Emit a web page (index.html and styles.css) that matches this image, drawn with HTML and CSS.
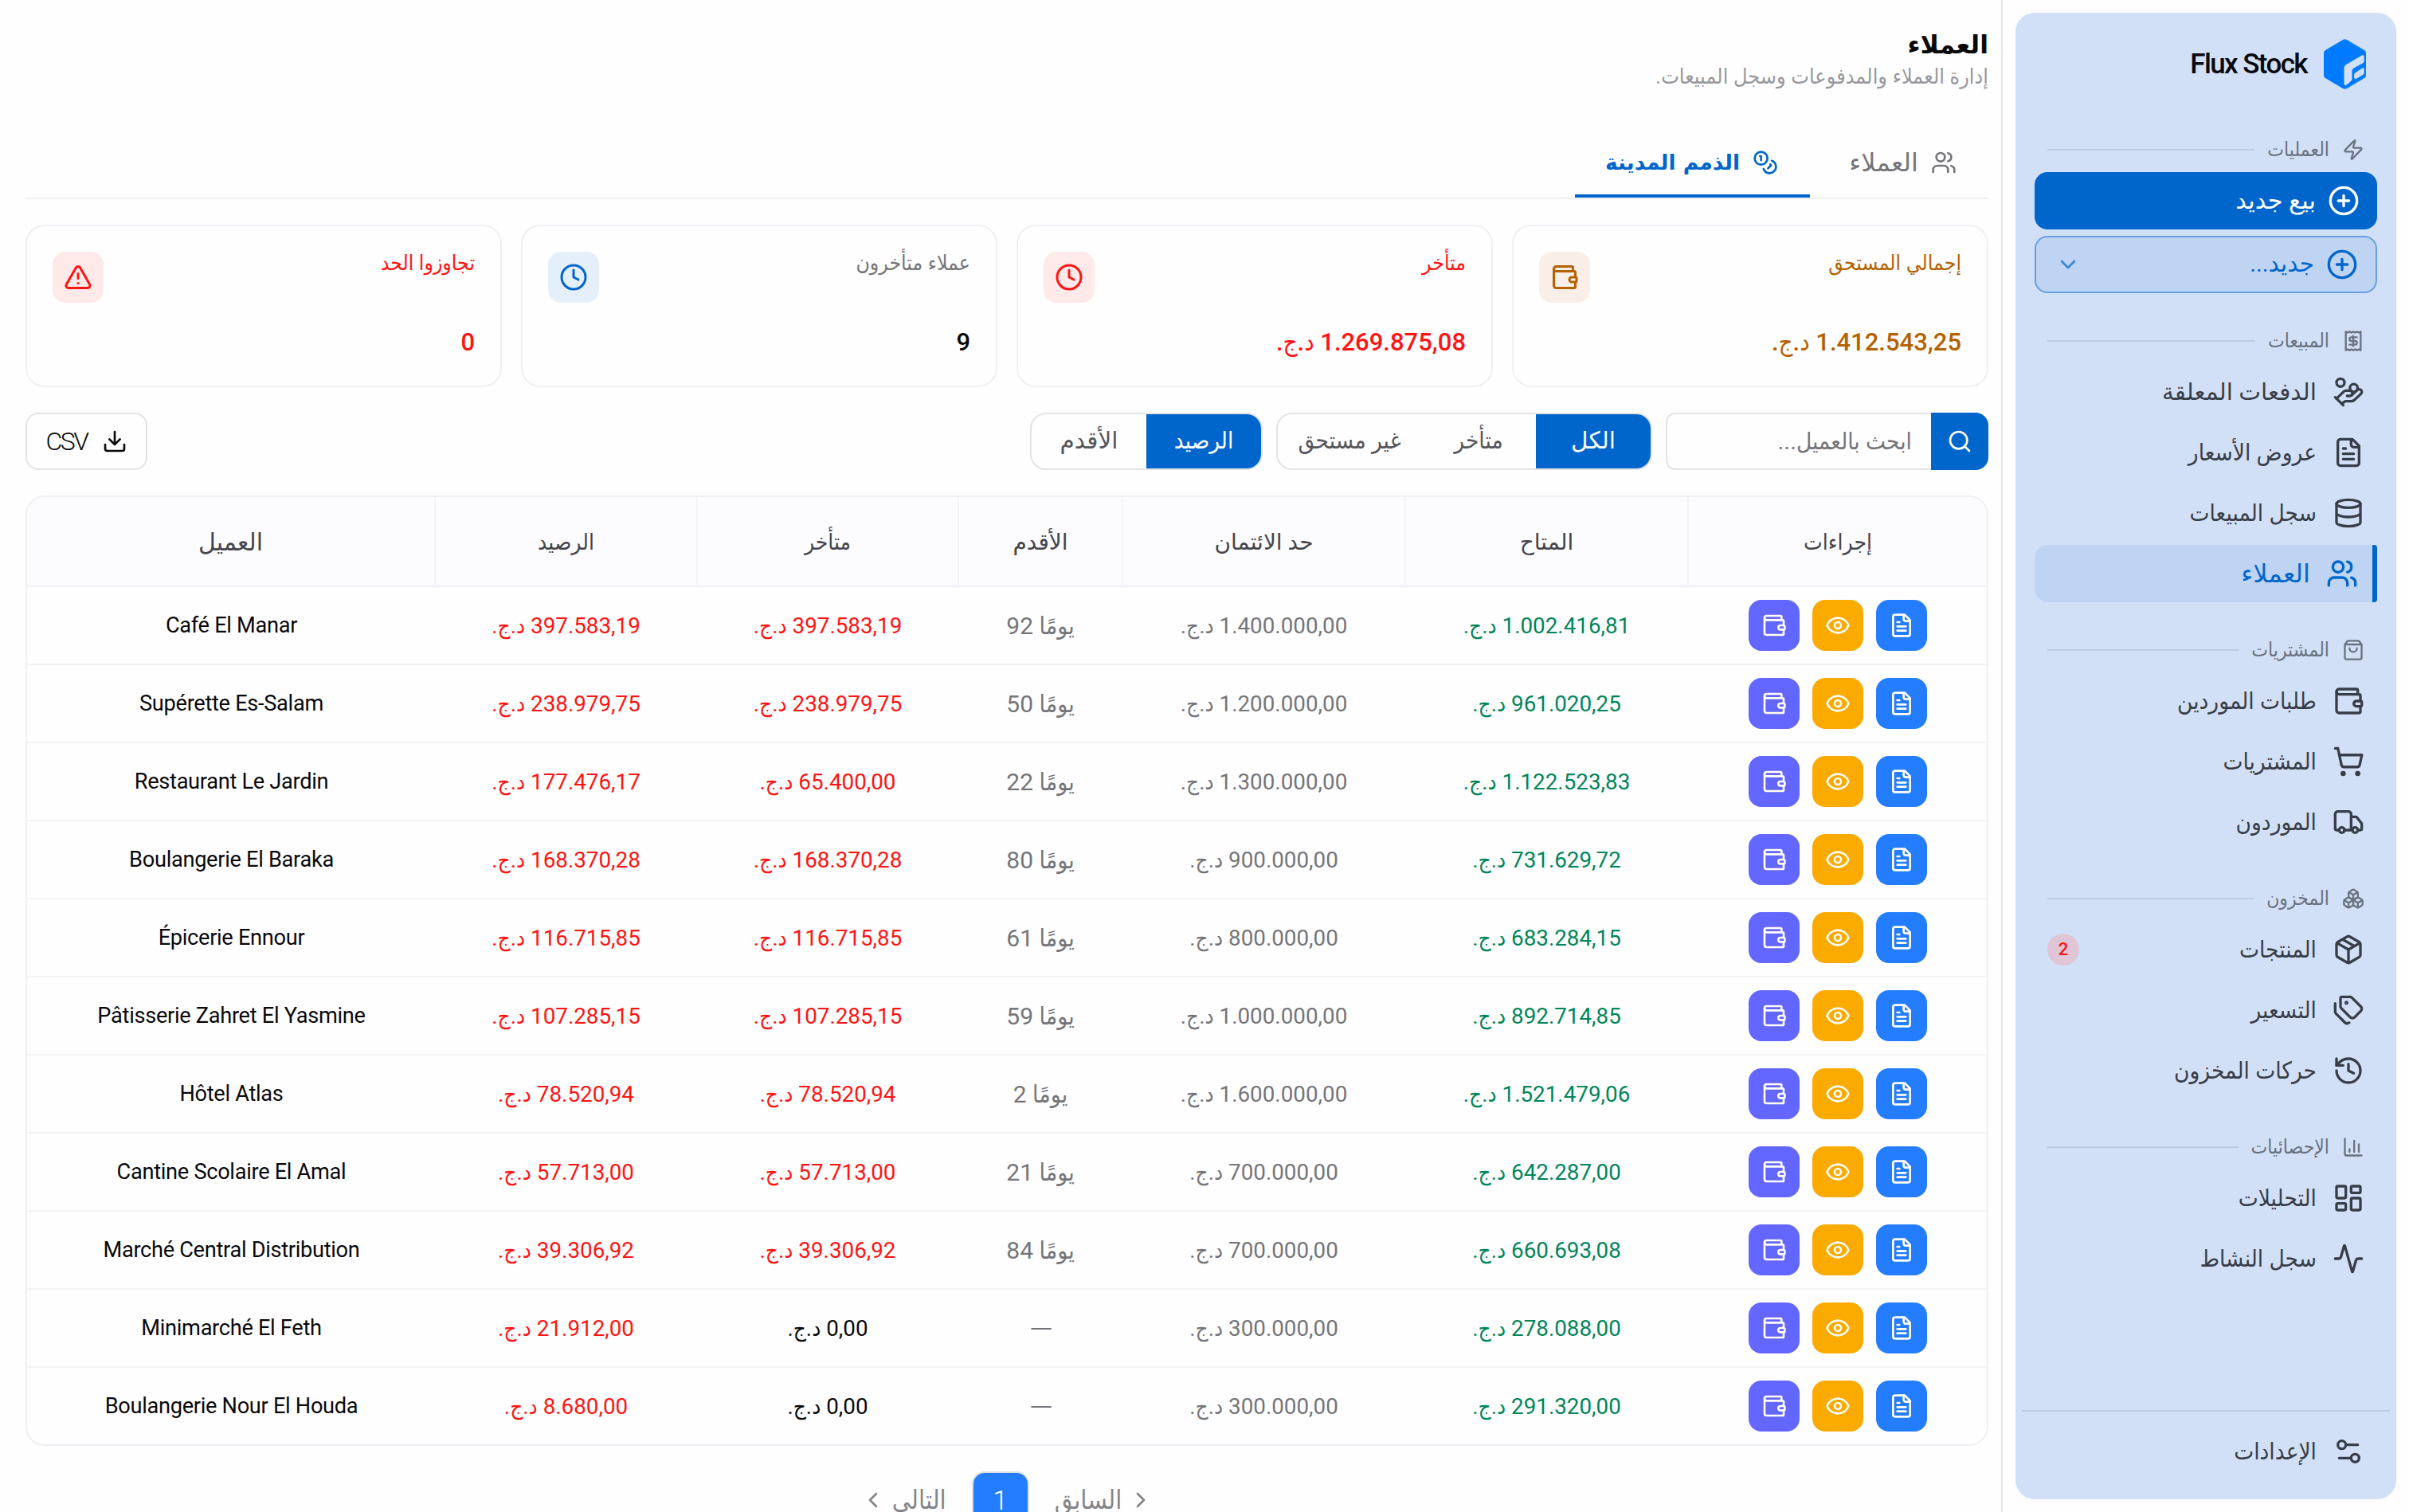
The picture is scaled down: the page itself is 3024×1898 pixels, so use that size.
FILE: index.html
```html
<!DOCTYPE html>
<html lang="ar" dir="rtl">
<head>
    <meta charset="UTF-8">
    <meta name="viewport" content="width=device-width, initial-scale=1.0">
    <title>Flux Stock</title>
    <link rel="stylesheet" href="styles.css">
</head>
<body>
    <svg class="sprite">
        <symbol id="zap" viewBox="0 0 24 24"><path d="M4 14a1 1 0 0 1-.78-1.63l9.9-10.2a.5.5 0 0 1 .86.46l-1.92 6.02A1 1 0 0 0 13 10h7a1 1 0 0 1 .78 1.63l-9.9 10.2a.5.5 0 0 1-.86-.46l1.92-6.02A1 1 0 0 0 11 14z"/></symbol>
        <symbol id="plus" viewBox="0 0 24 24"><circle cx="12" cy="12" r="10"/><path d="M8 12h8M12 8v8"/></symbol>
        <symbol id="chevron-down" viewBox="0 0 24 24"><path d="m6 9 6 6 6-6"/></symbol>
        <symbol id="chevron-left" viewBox="0 0 24 24"><path d="m15 18-6-6 6-6"/></symbol>
        <symbol id="chevron-right" viewBox="0 0 24 24"><path d="m9 18 6-6-6-6"/></symbol>
        <symbol id="receipt" viewBox="0 0 24 24"><path d="M4 2v20l2-1 2 1 2-1 2 1 2-1 2 1 2-1 2 1V2l-2 1-2-1-2 1-2-1-2 1-2-1-2 1ZM16 8h-6a2 2 0 1 0 0 4h4a2 2 0 1 1 0 4H8M12 17.5v-11"/></symbol>
        <symbol id="hand-coins" viewBox="0 0 24 24"><path d="M11 15h2a2 2 0 1 0 0-4h-3c-.6 0-1.1.2-1.4.6L3 17"/><path d="m7 21 1.6-1.4c.3-.4.8-.6 1.4-.6h4c1.1 0 2.1-.4 2.8-1.2l4.6-4.4a2 2 0 0 0-2.75-2.91l-4.2 3.9M2 16l6 6"/><circle cx="16" cy="9" r="2.9"/><circle cx="6" cy="5" r="3"/></symbol>
        <symbol id="file" viewBox="0 0 24 24"><path d="M15 2H6a2 2 0 0 0-2 2v16a2 2 0 0 0 2 2h12a2 2 0 0 0 2-2V7Z"/><path d="M14 2v4a2 2 0 0 0 2 2h4M10 9H8M16 13H8M16 17H8"/></symbol>
        <symbol id="database" viewBox="0 0 24 24"><ellipse cx="12" cy="5" rx="9" ry="3"/><path d="M3 5V19A9 3 0 0 0 21 19V5M3 12A9 3 0 0 0 21 12"/></symbol>
        <symbol id="users" viewBox="0 0 24 24"><path d="M16 21v-2a4 4 0 0 0-4-4H6a4 4 0 0 0-4 4v2"/><circle cx="9" cy="7" r="4"/><path d="M22 21v-2a4 4 0 0 0-3-3.87M16 3.13a4 4 0 0 1 0 7.75"/></symbol>
        <symbol id="bag" viewBox="0 0 24 24"><path d="M16 10a4 4 0 0 1-8 0M3.103 6.034h17.794"/><path d="M3.4 5.467a2 2 0 0 0-.4 1.2V20a2 2 0 0 0 2 2h14a2 2 0 0 0 2-2V6.667a2 2 0 0 0-.4-1.2l-2-2.667A2 2 0 0 0 17 2H7a2 2 0 0 0-1.6.8z"/></symbol>
        <symbol id="wallet" viewBox="0 0 24 24"><path d="M19 7V4a1 1 0 0 0-1-1H5a2 2 0 0 0 0 4h15a1 1 0 0 1 1 1v4h-3a2 2 0 0 0 0 4h3a1 1 0 0 0 1-1v-2a1 1 0 0 0-1-1"/><path d="M3 5v14a2 2 0 0 0 2 2h15a1 1 0 0 0 1-1v-4"/></symbol>
        <symbol id="cart" viewBox="0 0 24 24"><circle cx="8" cy="21" r="1"/><circle cx="19" cy="21" r="1"/><path d="M2.05 2.05h2l2.66 12.42a2 2 0 0 0 2 1.58h9.78a2 2 0 0 0 1.95-1.57l1.65-7.43H5.12"/></symbol>
        <symbol id="truck" viewBox="0 0 24 24"><path d="M14 18V6a2 2 0 0 0-2-2H4a2 2 0 0 0-2 2v11a1 1 0 0 0 1 1h2M15 18H9M19 18h2a1 1 0 0 0 1-1v-3.65a1 1 0 0 0-.22-.624l-3.48-4.35A1 1 0 0 0 17.52 8H14"/><circle cx="17" cy="18" r="2"/><circle cx="7" cy="18" r="2"/></symbol>
        <symbol id="boxes" viewBox="0 0 24 24"><path d="M2.97 12.92A2 2 0 0 0 2 14.63v3.24a2 2 0 0 0 .97 1.71l3 1.8a2 2 0 0 0 2.06 0L12 19v-5.5l-5-3-4.03 2.42ZM7 16.5l-4.74-2.85M7 16.5l5-3M7 16.5v5.17"/><path d="M12 13.5V19l3.97 2.38a2 2 0 0 0 2.06 0l3-1.8a2 2 0 0 0 .97-1.71v-3.24a2 2 0 0 0-.97-1.71L17 10.5l-5 3ZM17 16.5l-5-3M17 16.5l4.74-2.85M17 16.5v5.17"/><path d="M7.97 4.42A2 2 0 0 0 7 6.13v4.37l5 3 5-3V6.13a2 2 0 0 0-.97-1.71l-3-1.8a2 2 0 0 0-2.06 0l-3 1.8ZM12 8 7.26 5.15M12 8l4.74-2.85M12 13.5V8"/></symbol>
        <symbol id="package" viewBox="0 0 24 24"><path d="M11 21.73a2 2 0 0 0 2 0l7-4A2 2 0 0 0 21 16V8a2 2 0 0 0-1-1.73l-7-4a2 2 0 0 0-2 0l-7 4A2 2 0 0 0 3 8v8a2 2 0 0 0 1 1.73zM12 22V12M3.3 7l8.7 5 8.7-5M7.5 4.27l9 5.15"/></symbol>
        <symbol id="tags" viewBox="0 0 24 24"><path d="M13.172 2a2 2 0 0 1 1.414.586l6.71 6.71a2.4 2.4 0 0 1 0 3.408l-4.592 4.592a2.4 2.4 0 0 1-3.408 0l-6.71-6.71A2 2 0 0 1 6 9.172V3a1 1 0 0 1 1-1z"/><path d="M2 7v6.172a2 2 0 0 0 .586 1.414l6.71 6.71a2.4 2.4 0 0 0 3.191.193"/><circle cx="10.5" cy="6.5" r=".5" fill="currentColor"/></symbol>
        <symbol id="history" viewBox="0 0 24 24"><path d="M3 12a9 9 0 1 0 9-9 9.75 9.75 0 0 0-6.74 2.74L3 8"/><path d="M3 3v5h5M12 7v5l4 2"/></symbol>
        <symbol id="chart" viewBox="0 0 24 24"><path d="M3 3v16a2 2 0 0 0 2 2h16M18 17V9M13 17V5M8 17v-3"/></symbol>
        <symbol id="dashboard" viewBox="0 0 24 24"><rect x="3" y="3" width="7" height="9" rx="1"/><rect x="14" y="3" width="7" height="5" rx="1"/><rect x="14" y="12" width="7" height="9" rx="1"/><rect x="3" y="16" width="7" height="5" rx="1"/></symbol>
        <symbol id="activity" viewBox="0 0 24 24"><path d="M22 12h-2.48a2 2 0 0 0-1.93 1.46l-2.35 8.36a.25.25 0 0 1-.48 0L9.24 2.18a.25.25 0 0 0-.48 0l-2.35 8.36A2 2 0 0 1 4.49 12H2"/></symbol>
        <symbol id="settings" viewBox="0 0 24 24"><path d="M14 17H5M19 7h-9"/><circle cx="17" cy="17" r="3"/><circle cx="7" cy="7" r="3"/></symbol>
        <symbol id="coins" viewBox="0 0 24 24"><circle cx="8" cy="8" r="6"/><path d="M18.09 10.37A6 6 0 1 1 10.34 18M7 6h1v4M16.71 13.88l.7.71-2.82 2.82"/></symbol>
        <symbol id="clock" viewBox="0 0 24 24"><circle cx="12" cy="12" r="10"/><path d="M12 6v6l4 2"/></symbol>
        <symbol id="alert" viewBox="0 0 24 24"><path d="m21.73 18-8-14a2 2 0 0 0-3.48 0l-8 14A2 2 0 0 0 4 21h16a2 2 0 0 0 1.73-3M12 9v4M12 17h.01"/></symbol>
        <symbol id="search" viewBox="0 0 24 24"><circle cx="11" cy="11" r="8"/><path d="m21 21-4.34-4.34"/></symbol>
        <symbol id="download" viewBox="0 0 24 24"><path d="M12 15V3M21 15v4a2 2 0 0 1-2 2H5a2 2 0 0 1-2-2v-4M7 10l5 5 5-5"/></symbol>
        <symbol id="eye" viewBox="0 0 24 24"><path d="M2.062 12.348a1 1 0 0 1 0-.696 10.75 10.75 0 0 1 19.876 0 1 1 0 0 1 0 .696 10.75 10.75 0 0 1-19.876 0"/><circle cx="12" cy="12" r="3"/></symbol>
    </svg>

    <aside class="sidebar">
        <div class="panel">
            <div class="brand">
                <svg class="logo" viewBox="0 0 160 190">
                    <path class="logo-box" d="M72 3q8-5 16 0l66 39q6 4 6 11v84q0 7-6 11l-66 39q-8 5-16 0L6 148q-6-4-6-11V53q0-7 6-11z"/>
                    <path class="logo-mark" d="M77 109q0-8 7-12l60-35q9-4 9 5v16q0 5-5 8l-35 20q-6 4-6 10v30q0 5-4 8l-15 14q-11 6-11-5z"/>
                    <path class="logo-mark" d="M115 135q0-5 4-7l26-17q8-4 8 3v13q0 5-4 8l-24 14q-10 5-10-4z"/>
                </svg>
                <span>Flux Stock</span>
            </div>

            <div class="group first"><svg class="icon"><use href="#zap"/></svg><span>العمليات</span><hr></div>
            <a class="new-sale"><svg class="icon"><use href="#plus"/></svg><span>بيع جديد</span></a>
            <a class="new-other"><svg class="icon"><use href="#plus"/></svg><span>جديد...</span><svg class="icon chevron"><use href="#chevron-down"/></svg></a>

            <div class="group"><svg class="icon"><use href="#receipt"/></svg><span>المبيعات</span><hr></div>
            <nav>
                <a class="wide"><svg class="icon"><use href="#hand-coins"/></svg>الدفعات المعلقة</a>
                <a><svg class="icon"><use href="#file"/></svg>عروض الأسعار</a>
                <a><svg class="icon"><use href="#database"/></svg>سجل المبيعات</a>
                <a class="active wide"><svg class="icon"><use href="#users"/></svg>العملاء</a>
            </nav>

            <div class="group"><svg class="icon"><use href="#bag"/></svg><span>المشتريات</span><hr></div>
            <nav>
                <a><svg class="icon"><use href="#wallet"/></svg>طلبات الموردين</a>
                <a><svg class="icon"><use href="#cart"/></svg>المشتريات</a>
                <a><svg class="icon"><use href="#truck"/></svg>الموردون</a>
            </nav>

            <div class="group"><svg class="icon"><use href="#boxes"/></svg><span>المخزون</span><hr></div>
            <nav>
                <a><svg class="icon"><use href="#package"/></svg>المنتجات<b class="badge">2</b></a>
                <a><svg class="icon"><use href="#tags"/></svg>التسعير</a>
                <a><svg class="icon"><use href="#history"/></svg>حركات المخزون</a>
            </nav>

            <div class="group"><svg class="icon"><use href="#chart"/></svg><span>الإحصائيات</span><hr></div>
            <nav>
                <a><svg class="icon"><use href="#dashboard"/></svg>التحليلات</a>
                <a><svg class="icon"><use href="#activity"/></svg>سجل النشاط</a>
            </nav>

            <div class="panel-footer">
                <nav><a><svg class="icon"><use href="#settings"/></svg>الإعدادات</a></nav>
            </div>
        </div>
    </aside>

    <main>
        <header>
            <h1>العملاء</h1>
            <p>إدارة العملاء والمدفوعات وسجل المبيعات.</p>
        </header>

        <div class="tabs">
            <a><svg class="icon"><use href="#users"/></svg>العملاء</a>
            <a class="active"><svg class="icon"><use href="#coins"/></svg>الذمم المدينة</a>
        </div>

        <section class="cards">
            <div class="card orange">
                <div><h3>إجمالي المستحق</h3><strong>1.412.543,25 د.ج.</strong></div>
                <span class="card-icon"><svg class="icon"><use href="#wallet"/></svg></span>
            </div>
            <div class="card red">
                <div><h3>متأخر</h3><strong>1.269.875,08 د.ج.</strong></div>
                <span class="card-icon"><svg class="icon"><use href="#clock"/></svg></span>
            </div>
            <div class="card blue">
                <div><h3>عملاء متأخرون</h3><strong>9</strong></div>
                <span class="card-icon"><svg class="icon"><use href="#clock"/></svg></span>
            </div>
            <div class="card red">
                <div><h3>تجاوزوا الحد</h3><strong>0</strong></div>
                <span class="card-icon"><svg class="icon"><use href="#alert"/></svg></span>
            </div>
        </section>

        <div class="toolbar">
            <div class="search">
                <button><svg class="icon"><use href="#search"/></svg></button>
                <input type="text" placeholder="ابحث بالعميل...">
            </div>
            <div class="segment">
                <button class="active wide">الكل</button>
                <button>متأخر</button>
                <button class="long">غير مستحق</button>
            </div>
            <div class="segment">
                <button class="active">الرصيد</button>
                <button class="wide">الأقدم</button>
            </div>
            <button class="csv"><svg class="icon"><use href="#download"/></svg><span>CSV</span></button>
        </div>

        <div class="table" id="table">
            <div class="row head">
                <div class="wide client">العميل</div>
                <div>الرصيد</div>
                <div>متأخر</div>
                <div class="wide">الأقدم</div>
                <div class="wide">حد الائتمان</div>
                <div class="wide">المتاح</div>
                <div>إجراءات</div>
            </div>
        </div>

        <div class="pagination">
            <a><svg class="icon"><use href="#chevron-right"/></svg>السابق</a>
            <a class="page">1</a>
            <a>التالي<svg class="icon"><use href="#chevron-left"/></svg></a>
        </div>
    </main>

    <script>
        // name, balance, overdue, oldest (days), credit limit, available
        const clients = [
            ['Café El Manar', '397.583,19', '397.583,19', 92, '1.400.000,00', '1.002.416,81'],
            ['Supérette Es-Salam', '238.979,75', '238.979,75', 50, '1.200.000,00', '961.020,25'],
            ['Restaurant Le Jardin', '177.476,17', '65.400,00', 22, '1.300.000,00', '1.122.523,83'],
            ['Boulangerie El Baraka', '168.370,28', '168.370,28', 80, '900.000,00', '731.629,72'],
            ['Épicerie Ennour', '116.715,85', '116.715,85', 61, '800.000,00', '683.284,15'],
            ['Pâtisserie Zahret El Yasmine', '107.285,15', '107.285,15', 59, '1.000.000,00', '892.714,85'],
            ['Hôtel Atlas', '78.520,94', '78.520,94', 2, '1.600.000,00', '1.521.479,06'],
            ['Cantine Scolaire El Amal', '57.713,00', '57.713,00', 21, '700.000,00', '642.287,00'],
            ['Marché Central Distribution', '39.306,92', '39.306,92', 84, '700.000,00', '660.693,08'],
            ['Minimarché El Feth', '21.912,00', '0,00', 0, '300.000,00', '278.088,00'],
            ['Boulangerie Nour El Houda', '8.680,00', '0,00', 0, '300.000,00', '291.320,00']
        ];

        const icon = (name) => `<svg class="icon"><use href="#${name}"/></svg>`;
        const money = (value, cls) => `<div class="money ${cls}" dir="rtl">${value} د.ج.</div>`;
        const age = (days) => days
            ? `<div class="muted days" dir="rtl">يومًا ${days}</div>`
            : '<div class="muted empty">—</div>';

        const rows = clients.map(([name, balance, overdue, days, limit, available]) => `
            <div class="row">
                <div class="name">${name}</div>
                ${money(balance, 'danger')}
                ${money(overdue, days ? 'danger' : 'zero')}
                ${age(days)}
                ${money(limit, 'muted')}
                ${money(available, 'success')}
                <div class="actions">
                    <button class="indigo">${icon('wallet')}</button>
                    <button class="amber">${icon('eye')}</button>
                    <button class="sky">${icon('file')}</button>
                </div>
            </div>`);

        document.getElementById('table').insertAdjacentHTML('beforeend', rows.join(''));
    </script>
</body>
</html>
```
FILE: styles.css
```css
* {
    box-sizing: border-box;
}

body {
    margin: 0;
    height: 1898px;
    overflow: hidden;
    display: flex;
    background-color: #fefeff;
    color: #09090b;
    font-family: Roboto, "DejaVu Sans Condensed", "DejaVu Sans", sans-serif;
    font-size: 29.5px;
    line-height: 1;
    white-space: nowrap;
}

h1, h3, p {
    margin: 0;
}

button {
    border: none;
    padding: 0;
    background: none;
    color: inherit;
    font: inherit;
}

.sprite {
    display: none;
}

.icon {
    width: 40px;
    height: 40px;
    flex-shrink: 0;
    fill: none;
    stroke: currentColor;
    stroke-width: 2;
    stroke-linecap: round;
    stroke-linejoin: round;
}

/* words that need the regular width cut */
.wide {
    font-family: Roboto, "DejaVu Sans", sans-serif;
}

/* sidebar */
.sidebar {
    width: 512px;
    flex-shrink: 0;
    padding: 16px;
    border-left: 2px solid #e4e4e7;
}

.panel {
    height: 1866px;
    display: flex;
    flex-direction: column;
    padding: 0 24px;
    border-radius: 24px;
    background-color: #d2e0f7;
}

.brand {
    display: flex;
    align-items: center;
    gap: 21px;
    height: 128px;
    padding: 0 14px;
    font-size: 35px;
    font-weight: 500;
    letter-spacing: -1.6px;
    color: #09090f;
}

.logo {
    width: 53px;
    height: 63px;
}

.logo-box {
    fill: #007bff;
}

.logo-mark {
    fill: #d2e0f7;
}

.group {
    display: flex;
    align-items: center;
    gap: 16px;
    height: 56px;
    margin-top: 32px;
    padding: 0 16px;
    font-size: 24.5px;
    color: #69727f;
}

.group.first {
    margin-top: 16px;
}

.group .icon {
    width: 28px;
    height: 28px;
}

.group hr {
    flex: 1;
    height: 2px;
    margin: 0;
    border: none;
    background-color: #bdcce4;
}

.new-sale,
.new-other {
    display: flex;
    align-items: center;
    gap: 15px;
    height: 72px;
    padding: 0 22px;
    border-radius: 16px;
    font-family: Roboto, "DejaVu Sans", sans-serif;
}

.new-sale {
    background-color: #0066cc;
    color: #fff;
    font-size: 30.5px;
}

.new-other {
    margin-top: 8px;
    padding-left: 24px;
    border: 2px solid #669fe0;
    background-color: #bfd4f3;
    color: #0066cc;
}

.chevron {
    width: 32px;
    height: 32px;
    margin-right: auto;
    opacity: 0.7;
}

nav {
    display: flex;
    flex-direction: column;
    gap: 4px;
}

nav a {
    display: flex;
    align-items: center;
    gap: 20px;
    height: 72px;
    padding: 0 16px;
    color: #383e48;
    line-height: 32px;
}

nav a.active {
    padding-right: 18px;
    border-right: 6px solid #0066cc;
    border-radius: 16px 4px 4px 16px;
    background-color: #bfd4f3;
    color: #0066cc;
    font-size: 32px;
}

.badge {
    width: 40px;
    height: 40px;
    margin-right: auto;
    border-radius: 50%;
    background-color: #e0c5d6;
    color: #ff1414;
    font-size: 22px;
    font-weight: 500;
    line-height: 40px;
    text-align: center;
}

.panel-footer {
    margin: auto -16px 0;
    padding: 14px 16px 24px;
    border-top: 2px solid #bdcce4;
}

/* content */
main {
    flex: 1;
    padding: 0 16px 0 32px;
}

header {
    height: 160px;
    padding-top: 41px;
}

h1 {
    font-family: "DejaVu Sans", sans-serif;
    font-size: 31.5px;
}

header p {
    margin-top: 10px;
    font-size: 26.8px;
    color: #98989c;
}

.tabs {
    display: flex;
    height: 90px;
    border-bottom: 2px solid #efeff1;
    font-family: "DejaVu Sans", sans-serif;
}

.tabs a {
    display: flex;
    align-items: center;
    gap: 16px;
    width: 224px;
    padding: 4px 40px 0;
    border-bottom: 4px solid transparent;
    color: #757579;
    font-size: 32px;
}

.tabs a.active {
    width: 295px;
    border-color: #0066cc;
    color: #0066cc;
    font-size: 26.4px;
    font-weight: bold;
}

.tabs .icon {
    width: 32px;
    height: 32px;
}

.cards {
    display: grid;
    grid-template-columns: repeat(4, 1fr);
    gap: 24px;
    margin-top: 32px;
}

.card {
    display: flex;
    justify-content: space-between;
    height: 204px;
    padding: 32px;
    border: 2px solid #f0eff3;
    border-radius: 24px;
}

.card h3 {
    margin: 1px 0 71px;
    font-size: 26.4px;
    font-weight: normal;
}

.card strong {
    font-size: 31px;
    font-weight: 500;
}

.card-icon {
    display: flex;
    align-items: center;
    justify-content: center;
    width: 64px;
    height: 64px;
    border-radius: 16px;
}

.card-icon .icon {
    width: 36px;
    height: 36px;
}

.orange {
    color: #b46200;
}

.orange .card-icon {
    background-color: #f9efe8;
}

.red {
    color: #ff1414;
}

.red .card-icon {
    background-color: #ffe9e9;
}

.blue h3 {
    color: #757579;
}

.blue .card-icon {
    background-color: #e5effa;
    color: #0066cc;
}

.toolbar {
    display: flex;
    gap: 17px;
    margin-top: 32px;
    height: 72px;
}

.search {
    display: flex;
    width: 405px;
}

.search button {
    display: flex;
    align-items: center;
    justify-content: center;
    width: 72px;
    border-radius: 0 16px 16px 0;
    background-color: #0066cc;
    color: #fff;
}

.toolbar .icon {
    width: 32px;
    height: 32px;
}

.search input {
    flex: 1;
    min-width: 0;
    padding: 0 24px;
    border: 2px solid #e4e4e7;
    border-right: none;
    border-radius: 12px 0 0 12px;
    background: none;
    font: inherit;
}

.search input::placeholder {
    color: #757579;
}

.segment {
    display: flex;
    border: 2px solid #e4e4e7;
    border-radius: 20px;
    overflow: hidden;
    color: #56565b;
}

.segment button {
    width: 144px;
}

.segment .long {
    width: 180px;
}

.segment .active {
    background-color: #0066cc;
    color: #fff;
}

.csv {
    display: flex;
    align-items: center;
    justify-content: center;
    gap: 18px;
    width: 153px;
    margin-right: auto;
    border: 2px solid #e4e4e7;
    border-radius: 16px;
    font-size: 32px;
    font-weight: 300;
    letter-spacing: -2.5px;
}

.table {
    direction: ltr;
    margin-top: 32px;
    border: 2px solid #f0eff3;
    border-radius: 24px;
    overflow: hidden;
}

.row {
    display: grid;
    grid-template-columns: 513px 329px 328px 206px 355px 355px 1fr;
    align-items: center;
    height: 98px;
    border-bottom: 2px solid #f3f2f5;
    text-align: center;
    font-size: 28px;
}

.row:last-child {
    height: 96px;
    border-bottom: none;
}

.head {
    height: 113px;
    background-color: #fcfbfe;
    border-bottom-color: #f0eff3;
    color: #45454b;
}

.head div {
    height: 100%;
    line-height: 113px;
    border-right: 2px solid #f3f2f5;
}

.head div:last-child {
    border-right: none;
}

.head .client {
    font-size: 30px;
}

.name,
.money,
.days {
    padding-top: 2px;
}

.name {
    font-size: 27.2px;
    letter-spacing: -0.3px;
}

.money {
    padding-right: 2px;
    font-size: 27.8px;
}

.days {
    padding-right: 2px;
    font-size: 30px;
}

.empty {
    font-family: "DejaVu Sans", sans-serif;
}

.danger {
    color: #ff1414;
}

.muted {
    color: #757579;
}

.success {
    color: #008558;
}

.actions {
    display: flex;
    justify-content: center;
    gap: 16px;
}

.actions button {
    display: flex;
    align-items: center;
    justify-content: center;
    width: 64px;
    height: 64px;
    border-radius: 16px;
    color: #fff;
}

.actions .icon {
    width: 32px;
    height: 32px;
}

.indigo {
    background-color: #6366ff;
}

.amber {
    background-color: #fbab00;
}

.sky {
    background-color: #247dff;
}

.pagination {
    display: flex;
    justify-content: center;
    gap: 32px;
    margin-top: 32px;
    color: #858589;
}

.pagination a {
    display: flex;
    align-items: center;
    gap: 8px;
    height: 72px;
    font-size: 32.5px;
}

.pagination .icon {
    width: 32px;
    height: 32px;
}

.pagination .page {
    justify-content: center;
    width: 72px;
    border: 2px solid #dfdfe2;
    border-radius: 16px;
    background-color: #247dff;
    color: #fff;
    font-size: 34px;
    font-weight: 300;
}
```
